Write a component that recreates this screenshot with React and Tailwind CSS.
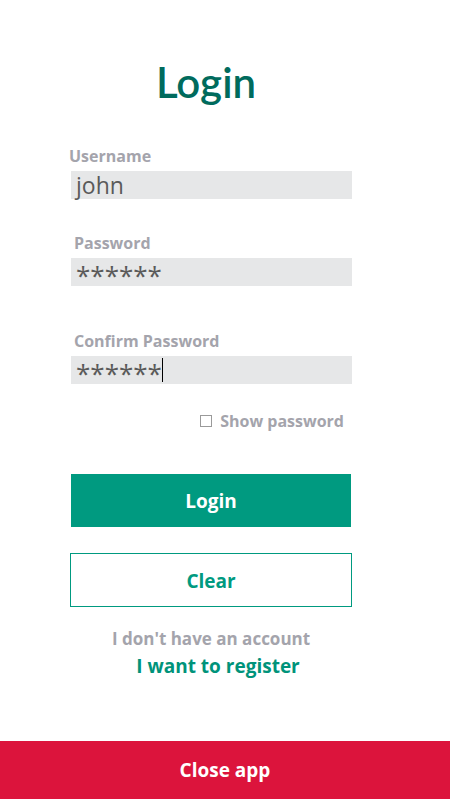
import React, { useState } from "react";

// Login screen
const Field = ({ label, value, labelClass, caret, secret }) => (
  <div>
    <label className={`block text-[16px] leading-[20px] font-bold text-[#a4a4ac] ${labelClass}`}>{label}</label>
    <div className="mt-[5px] h-[28px] bg-[#e6e7e8] flex items-center pl-[5px] ml-[1px]">
      <span className={`leading-[28px] text-[#5a5a5a] ${secret ? "text-[26px] pt-[5px]" : "text-[23px]"}`}>{value}</span>
      {caret && <span className="w-px h-[24px] bg-black" />}
    </div>
  </div>
);

export default function App() {
  const [show, setShow] = useState(false);

  return (
    <div className="min-h-[799px] bg-white flex flex-col font-['Open_Sans',sans-serif]">
      <div className="w-[282px] ml-[70px] pt-[57px]">
        <h1 className="text-center pr-[10px] text-[42px] leading-[50px] text-[#006b5d] font-['Lato',sans-serif] font-semibold">
          Login
        </h1>

        <div className="mt-[39px]">
          <Field label="Username" value="john" labelClass="-ml-[1px]" />
        </div>
        <div className="mt-[34px]">
          <Field label="Password" value="******" labelClass="ml-[4px]" secret />
        </div>
        <div className="mt-[45px]">
          <Field label="Confirm Password" value="******" labelClass="ml-[4px]" caret secret />
        </div>

        <label className="mt-[27px] flex items-center justify-end gap-[8px] pr-[8px] text-[16px] leading-[20px] font-bold text-[#a4a4ac]">
          <span
            onClick={() => setShow(!show)}
            className="w-[12px] h-[12px] border border-[#9a9a9a] bg-white"
          />
          Show password
        </label>

        <button className="mt-[43px] w-[280px] ml-[1px] h-[53px] pt-[2px] bg-[#009a80] text-white text-[19px] font-bold">
          Login
        </button>
        <button className="mt-[26px] w-[282px] h-[54px] pt-[2px] border border-[#009a80] bg-white text-[#009a80] text-[19px] font-bold">
          Clear
        </button>

        <p className="mt-[22px] text-center text-[17px] leading-[20px] font-bold text-[#a4a4ac]">
          I don't have an account
        </p>
        <p className="mt-[6px] text-center pl-[14px] text-[19px] leading-[22px] font-bold text-[#00937a]">
          I want to register
        </p>
      </div>

      <button className="mt-auto w-full h-[58px] bg-[#dc143c] text-white text-[19px] font-bold">
        Close app
      </button>
    </div>
  );
}
